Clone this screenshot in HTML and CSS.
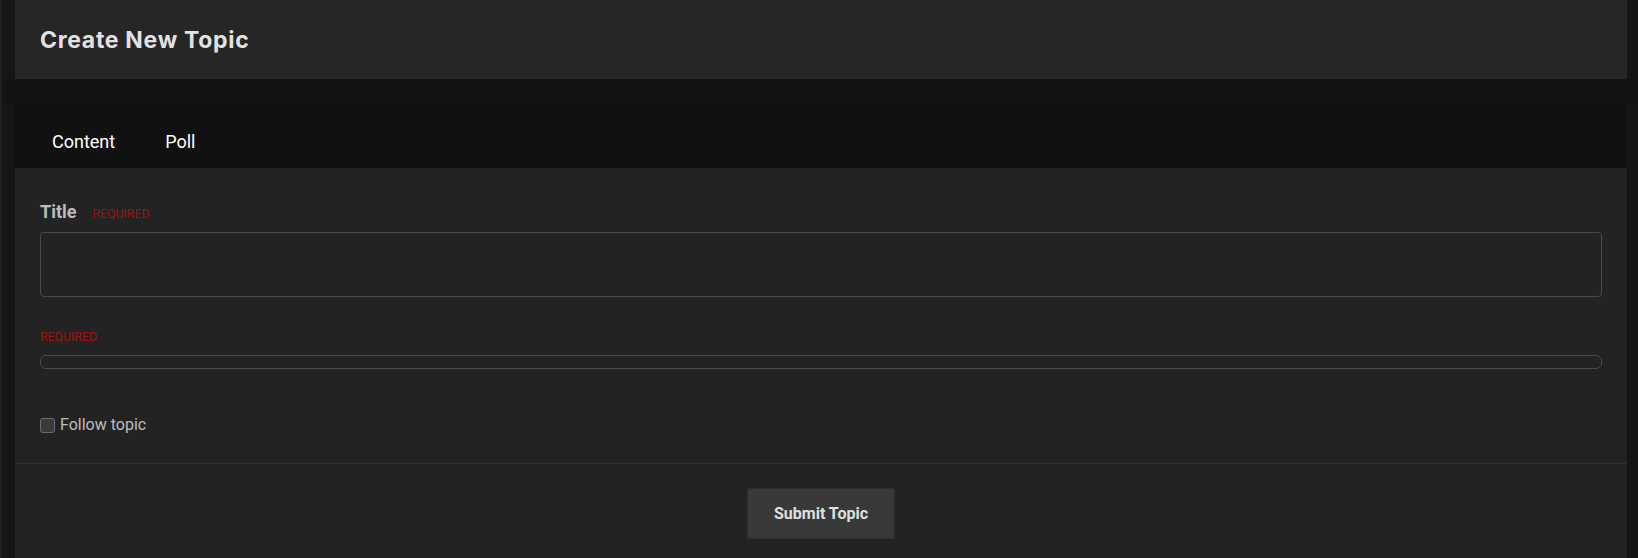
FILE: index.html
```html
<!DOCTYPE html>
<html lang="en">
<head>
<meta charset="utf-8">
<title>Create New Topic</title>
<link rel="stylesheet" href="styles.css">
</head>
<body>
<div class="page">
  <div class="header">
    <h1 class="page-title">Create New Topic</h1>
  </div>
  <div class="spacer"></div>
  <div class="tabs">
    <span class="tab">Content</span>
    <span class="tab">Poll</span>
  </div>
  <div class="form-body">
    <div class="label-row">
      <span class="field-label">Title</span>
      <span class="required">REQUIRED</span>
    </div>
    <div class="text-input"></div>
    <div class="label-row small">
      <span class="required no-margin">REQUIRED</span>
    </div>
    <div class="editor-input"></div>
    <label class="check-row">
      <span class="checkbox"></span>
      <span class="check-text">Follow topic</span>
    </label>
  </div>
  <div class="form-footer">
    <button class="submit-btn">Submit Topic</button>
  </div>
</div>
</body>
</html>
```

FILE: styles.css
```css
html, body {
  margin: 0;
  padding: 0;
  background: #151515;
  height: 100%;
}

.page {
  border-left: 2px solid #1f1f1f;
  padding: 0 11px 0 13px;
  min-height: 100%;
  box-sizing: border-box;
  font-family: Roboto, "Liberation Sans", sans-serif;
}

.header {
  height: 79px;
  background: #262626;
  display: flex;
  align-items: center;
  padding-left: 25px;
}

.page-title {
  margin: 0;
  font-family: Inter, "Open Sans", sans-serif;
  font-weight: 700;
  font-size: 23px;
  color: #e2e2e2;
  letter-spacing: 0.7px;
}

.spacer {
  height: 25px;
  background: #131313;
  margin: 0 -11px 0 -13px;
}

.tabs {
  height: 64px;
  box-sizing: border-box;
  background: #111111;
  padding: 28px 0 0 11px;
  display: flex;
}

.tab {
  padding: 0 24px 0 26px;
  font-size: 18px;
  line-height: 20px;
  color: #ffffff;
}

.form-body {
  background: #232323;
  padding: 32px 25px 29px 25px;
  border-bottom: 1px solid #303030;
}

.label-row {
  display: flex;
  align-items: baseline;
  height: 24px;
  margin-bottom: 8px;
}

.label-row.small {
  height: 16px;
  margin-top: 32px;
  margin-bottom: 10px;
}

.field-label {
  font-weight: 700;
  font-size: 18px;
  line-height: 24px;
  color: #bcbcbc;
}

.required {
  margin-left: 16px;
  font-size: 12.3px;
  line-height: 16px;
  color: #9c1212;
}

.required.no-margin {
  margin-left: 0;
}

.text-input {
  height: 63px;
  border: 1px solid #4a4a4a;
  border-radius: 4px;
  background: #232323;
}

.editor-input {
  height: 12px;
  border: 1px solid #4a4a4a;
  border-radius: 6px;
  background: #232323;
}

.check-row {
  display: flex;
  align-items: center;
  margin-top: 47px;
  gap: 5px;
}

.checkbox {
  width: 13px;
  height: 13px;
  border: 1px solid #6b6b6b;
  border-radius: 3px;
  background: #3a3a3a;
}

.check-text {
  font-size: 16px;
  line-height: 18px;
  color: #bdbdbd;
}

.form-footer {
  background: #232323;
  padding: 24px 0 30px;
  display: flex;
  justify-content: center;
}

.submit-btn {
  height: 51px;
  padding: 0 26px;
  background: #393939;
  border: 1px solid #2e2e2e;
  color: #e0e0e0;
  font-family: Roboto, "Liberation Sans", sans-serif;
  font-weight: 700;
  font-size: 16px;
}
```
